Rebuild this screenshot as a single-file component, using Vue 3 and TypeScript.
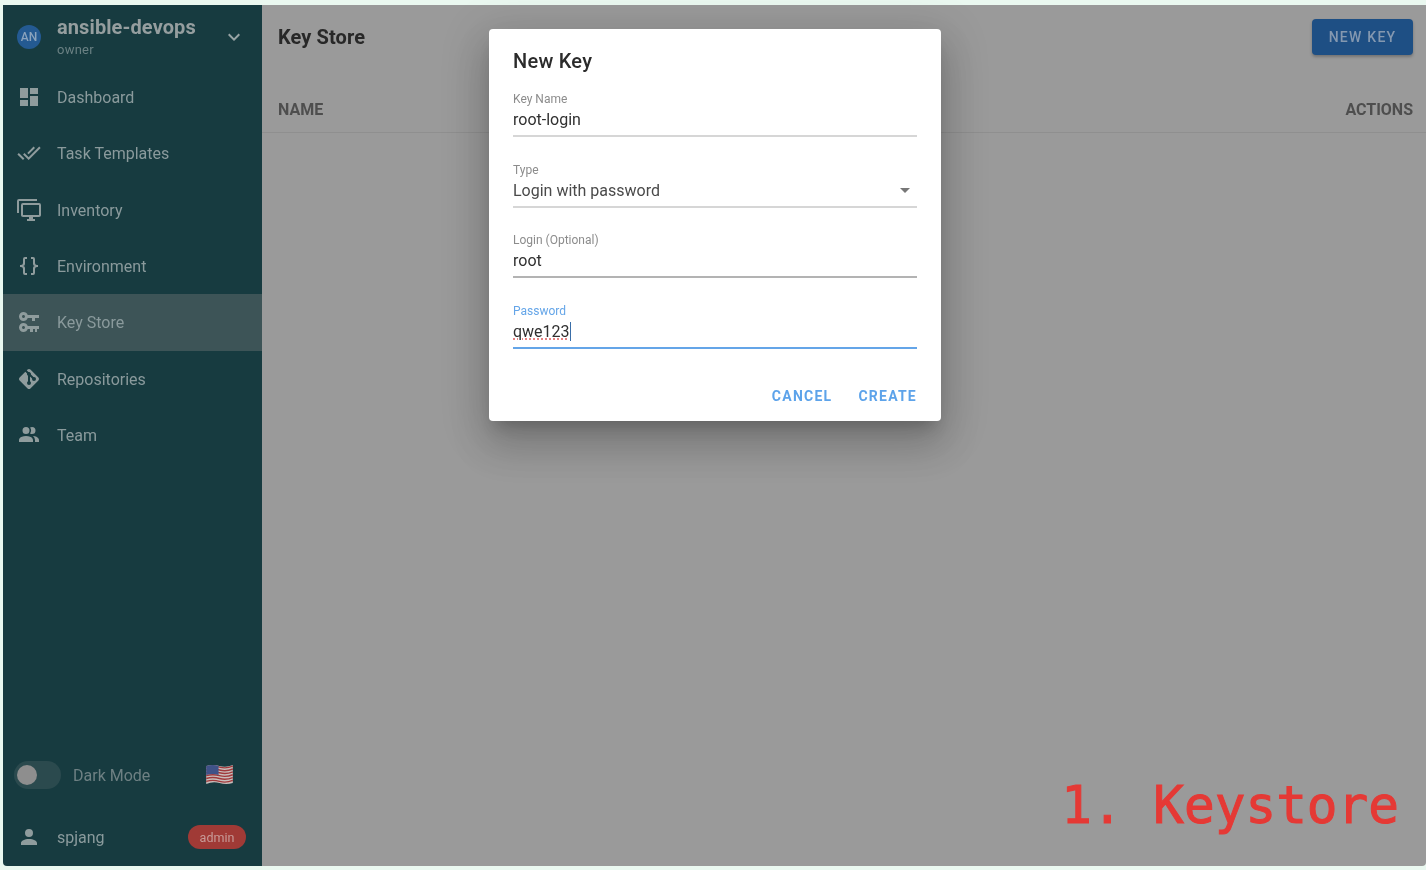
<script setup lang="ts">
interface Item { label: string; path: string; active?: boolean }
const items: Item[] = [
  { label: 'Dashboard', path: 'M13,3V9H21V3M13,21H21V11H13M3,21H11V15H3M3,13H11V3H3V13Z' },
  { label: 'Task Templates', path: 'M0.41,13.41L6,19L7.41,17.58L1.83,12M22.24,5.58L11.66,16.17L7.5,12L6.07,13.41L11.66,19L23.66,7M18,7L16.59,5.58L10.24,11.93L11.66,13.34L18,7Z' },
  { label: 'Inventory', path: 'M22,17V7H6V17H22M22,5A2,2 0 0,1 24,7V17C24,18.11 23.1,19 22,19H16V21H18V23H10V21H12V19H6C4.89,19 4,18.11 4,17V7A2,2 0 0,1 6,5H22M2,3V15H0V3A2,2 0 0,1 2,1H20V3H2Z' },
  { label: 'Environment', path: 'M8,3A2,2 0 0,0 6,5V9A2,2 0 0,1 4,11H3V13H4A2,2 0 0,1 6,15V19A2,2 0 0,0 8,21H10V19H8V14A2,2 0 0,0 6,12A2,2 0 0,0 8,10V5H10V3M16,3A2,2 0 0,1 18,5V9A2,2 0 0,0 20,11H21V13H20A2,2 0 0,0 18,15V19A2,2 0 0,1 16,21H14V19H16V14A2,2 0 0,1 18,12A2,2 0 0,1 16,10V5H14V3H16Z' },
  { label: 'Key Store', active: true, path: 'M6.5 2C8.46 2 10.13 3.25 10.74 5H22V8H18V11H15V8H10.74C10.13 9.75 8.46 11 6.5 11C4 11 2 9 2 6.5C2 4 4 2 6.5 2M6.5 5C5.67 5 5 5.67 5 6.5C5 7.33 5.67 8 6.5 8C7.33 8 8 7.33 8 6.5C8 5.67 7.33 5 6.5 5M6.5 13C8.46 13 10.13 14.25 10.74 16H22V19H20V22H18V19H16V22H13V19H10.74C10.13 20.75 8.46 22 6.5 22C4 22 2 20 2 17.5C2 15 4 13 6.5 13M6.5 16C5.67 16 5 16.67 5 17.5C5 18.33 5.67 19 6.5 19C7.33 19 8 18.33 8 17.5C8 16.67 7.33 16 6.5 16Z' },
  { label: 'Repositories', path: 'M2.6,10.59L8.38,4.8L10.07,6.5C9.83,7.35 10.22,8.28 11,8.73V14.27C10.4,14.61 10,15.26 10,16A2,2 0 0,0 12,18A2,2 0 0,0 14,16C14,15.26 13.6,14.61 13,14.27V9.41L15.07,11.5C15,11.65 15,11.82 15,12A2,2 0 0,0 17,14A2,2 0 0,0 19,12A2,2 0 0,0 17,10C16.82,10 16.65,10 16.5,10.07L13.93,7.5C14.19,6.57 13.71,5.55 12.78,5.16C12.35,5 11.9,4.96 11.5,5.07L9.8,3.38L10.59,2.6C11.37,1.81 12.63,1.81 13.41,2.6L21.4,10.59C22.19,11.37 22.19,12.63 21.4,13.41L13.41,21.4C12.63,22.19 11.37,22.19 10.59,21.4L2.6,13.41C1.81,12.63 1.81,11.37 2.6,10.59Z' },
  { label: 'Team', path: 'M16 17V19H2V17S2 13 9 13 16 17 16 17M12.5 7.5A3.5 3.5 0 1 0 9 11A3.5 3.5 0 0 0 12.5 7.5M15.94 13A5.32 5.32 0 0 1 18 17V19H22V17S22 13.37 15.94 13M15 4A3.39 3.39 0 0 0 13.07 4.59A5 5 0 0 1 13.07 10.41A3.39 3.39 0 0 0 15 11A3.5 3.5 0 0 0 15 4Z' },
]
const stripes = [2.2, 5.2, 8.2, 11.2, 14.2, 17.2]
const wave = (y: number): string => `M0 ${y} Q7 ${y - 2} 14 ${y} T28 ${y - 1}`
</script>

<template>
  <div class="frame">
    <div class="shell">
      <aside class="side">
        <div class="project">
          <span class="avatar">AN</span>
          <div class="project-text">
            <div class="project-name">ansible-devops</div>
            <div class="project-role">owner</div>
          </div>
          <svg class="chev" viewBox="0 0 24 24"><path d="M7.41,8.58L12,13.17L16.59,8.58L18,10L12,16L6,10L7.41,8.58Z" /></svg>
        </div>
        <nav class="nav">
          <div v-for="it in items" :key="it.label" class="nav-item" :class="{ active: it.active }">
            <svg class="ico" viewBox="0 0 24 24"><path :d="it.path" /></svg>
            <span class="nav-label">{{ it.label }}</span>
          </div>
        </nav>
        <div class="side-bottom">
          <div class="mode">
            <span class="switch"><span class="knob"></span></span>
            <span class="mode-label">Dark Mode</span>
            <svg class="flag" viewBox="0 0 28 20">
              <path d="M0 1 Q7 -1 14 1 T28 0 V19 Q21 21 14 19 T0 20 Z" fill="#c9bdbb" />
              <path v-for="s in stripes" :key="s" :d="wave(s)" fill="none" stroke="#a03a3c" stroke-width="1.5" />
              <path d="M0 1 Q7 -1 13 1 V10.5 Q7 8.5 0 10.5 Z" fill="#3f5288" />
            </svg>
          </div>
          <div class="user">
            <svg class="ico" viewBox="0 0 24 24"><path d="M12,4A4,4 0 0,1 16,8A4,4 0 0,1 12,12A4,4 0 0,1 8,8A4,4 0 0,1 12,4M12,14C16.42,14 20,15.79 20,18V20H4V18C4,15.79 7.58,14 12,14Z" /></svg>
            <span class="user-name">spjang</span>
            <span class="badge">admin</span>
          </div>
        </div>
      </aside>
      <main class="main">
        <header class="toolbar">
          <h1 class="title">Key Store</h1>
          <button class="new-key">NEW KEY</button>
        </header>
        <div class="thead"><span>NAME</span><span>ACTIONS</span></div>
        <div class="note">1. Keystore</div>
      </main>
    </div>
    <div class="overlay">
      <section class="dialog">
        <h2 class="dialog-title">New Key</h2>
        <div class="field">
          <label>Key Name</label>
          <div class="value">root-login</div>
        </div>
        <div class="field">
          <label>Type</label>
          <div class="value select">
            <span>Login with password</span>
            <svg class="menu-down" viewBox="0 0 24 24"><path d="M7,10L12,15L17,10H7Z" /></svg>
          </div>
        </div>
        <div class="field dark">
          <label>Login (Optional)</label>
          <div class="value">root</div>
        </div>
        <div class="field focused">
          <label>Password</label>
          <div class="value"><span class="typed">qwe123</span><span class="caret"></span></div>
        </div>
        <div class="actions">
          <span class="btn">CANCEL</span>
          <span class="btn">CREATE</span>
        </div>
      </section>
    </div>
  </div>
</template>

<style>
html, body { margin: 0; background: #eaf8f0; }
</style>

<style scoped>
.frame {
  position: relative;
  box-sizing: border-box;
  width: 1426px;
  height: 870px;
  padding: 5px 0 4px 3px;
  font-family: Roboto, "Liberation Sans", sans-serif;
  background: #eaf8f0;
  overflow: hidden;
  filter: blur(0.65px);
}
.shell {
  display: flex;
  height: 100%;
  border-radius: 0 0 4px 4px;
  overflow: hidden;
}
.side {
  width: 259px;
  flex: none;
  display: flex;
  flex-direction: column;
  background: #173b40;
}
.project {
  display: flex;
  align-items: center;
  height: 64px;
  padding: 0 16px 0 14px;
}
.avatar {
  width: 24px;
  height: 24px;
  border-radius: 50%;
  background: #245a92;
  color: #8ba3bd;
  font-size: 12px;
  font-weight: 500;
  display: flex;
  align-items: center;
  justify-content: center;
  flex: none;
}
.project-text { margin-left: 16px; flex: 1; margin-top: -3px; }
.project-name { font-size: 20px; font-weight: 700; line-height: 26px; letter-spacing: .1px; color: #959e9f; }
.project-role { font-size: 13px; line-height: 16px; letter-spacing: .25px; color: #6a8083; margin-top: 2px; }
.chev { width: 24px; height: 24px; fill: #97a3a4; }
.nav-item {
  display: flex;
  align-items: center;
  height: 56.33px;
  padding-left: 14px;
  font-size: 16px;
  color: #8a9a9c;
}
.nav-label { padding-top: 1px; }
.nav-item.active { background: #3d5457; }
.ico { width: 24px; height: 24px; fill: #8f9c9d; flex: none; margin-right: 16px; }
.side-bottom { margin-top: auto; }
.mode {
  display: flex;
  align-items: center;
  height: 56px;
  padding-left: 11px;
  margin-bottom: 6px;
}
.switch {
  position: relative;
  width: 47px;
  height: 28px;
  border-radius: 14px;
  background: #2b4a4e;
  flex: none;
}
.knob {
  position: absolute;
  left: 3px;
  top: 4px;
  width: 20px;
  height: 20px;
  border-radius: 50%;
  background: #8e8e8e;
}
.mode-label { margin-left: 12px; font-size: 16px; color: #6e8083; }
.flag { width: 27px; height: 19px; margin-left: 56px; margin-top: -2px; }
.user {
  display: flex;
  align-items: center;
  height: 56px;
  padding-left: 14px;
  margin-bottom: 1px;
}
.user-name { font-size: 16px; color: #8a9a9c; flex: 1; }
.badge {
  width: 58px;
  height: 24px;
  margin-right: 16px;
  border-radius: 12px;
  background: #a03a36;
  color: #c79a97;
  font-size: 12.5px;
  display: flex;
  align-items: center;
  justify-content: center;
}
.main {
  flex: 1;
  display: flex;
  flex-direction: column;
  background: #9a9a9a;
}
.toolbar {
  display: flex;
  align-items: center;
  justify-content: space-between;
  height: 64px;
  padding: 0 13px 0 16px;
}
.title { margin: 0; font-size: 20px; font-weight: 700; letter-spacing: .1px; color: #282828; }
.new-key {
  width: 101px;
  height: 36px;
  margin-top: -1px;
  border: 0;
  border-radius: 4px;
  background: #1e4f84;
  color: #8498b0;
  font: 500 14px Roboto, sans-serif;
  letter-spacing: 1.25px;
  box-shadow: 0 2px 3px rgba(0,0,0,.25);
}
.thead {
  display: flex;
  justify-content: space-between;
  align-items: center;
  height: 64px;
  box-sizing: border-box;
  padding: 17px 13px 0 16px;
  border-bottom: 1px solid #8f8f8f;
  font-size: 16px;
  font-weight: 700;
  color: #4e4e4e;
}
.note {
  margin-top: auto;
  padding: 0 27px 30px 0;
  text-align: right;
  font: 51px/60px "DejaVu Sans Mono", monospace;
  color: #e53935;
  -webkit-text-stroke: 1px #e53935;
}
.overlay {
  position: absolute;
  inset: 0;
  display: flex;
  justify-content: center;
  align-items: flex-start;
  padding: 29px 0 0 4px;
  pointer-events: none;
}
.dialog {
  box-sizing: border-box;
  width: 452px;
  height: 392px;
  padding: 0 24px;
  background: #fff;
  border-radius: 4px;
  box-shadow: 0 11px 15px -7px rgba(0,0,0,.2), 0 24px 38px 3px rgba(0,0,0,.14), 0 9px 46px 8px rgba(0,0,0,.12);
}
.dialog-title {
  margin: 0;
  padding-top: 19px;
  height: 24px;
  line-height: 26px;
  font-size: 20px;
  font-weight: 500;
  letter-spacing: .25px;
  color: #2b2b2b;
}
.field { margin-top: 19px; height: 51.5px; }
.field label {
  display: block;
  font-size: 12px;
  line-height: 16px;
  color: #8c8c8c;
}
.value {
  display: flex;
  align-items: center;
  box-sizing: border-box;
  height: 31px;
  margin-top: -1px;
  padding-bottom: 2px;
  font-size: 16px;
  color: #303030;
  border-bottom: 2px solid #d6d6d6;
}
.select { justify-content: space-between; color: #4a4a4a; }
.menu-down { width: 24px; height: 24px; fill: #777; }
.dark .value { border-bottom-color: #b3b3b3; }
.focused label { color: #64a5e8; }
.focused .value { border-bottom-color: #64a5e8; }
.typed { text-decoration: underline dotted #e05a5a; text-underline-offset: 2px; }
.caret { width: 1.5px; height: 19px; background: #3a6ea8; }
.actions {
  display: flex;
  justify-content: flex-end;
  gap: 26px;
  margin-top: 31.5px;
}
.btn {
  font-size: 14px;
  font-weight: 700;
  letter-spacing: 1.25px;
  color: #5da3ea;
  line-height: 20px;
}
</style>
